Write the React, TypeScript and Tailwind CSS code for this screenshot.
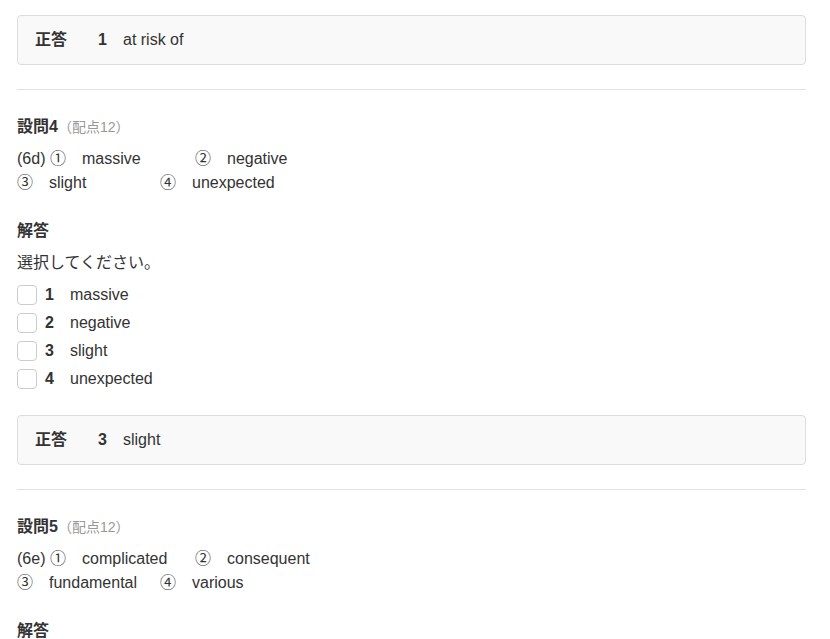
import React from "react";

const FONT = "font-['Liberation_Sans','Noto_Sans_CJK_JP',sans-serif]";

function AnswerBox({ n, text }: { n: string; text: string }) {
  return (
    <div className="h-[50px] rounded-[4px] border border-[#dddddd] bg-[#f9f9f9] pl-[17px] flex items-center text-[16px] leading-6 text-[#333333]">
      <span className="font-bold w-[63px]">正答</span>
      <span className="font-bold w-[25px]">{n}</span>
      <span>{text}</span>
    </div>
  );
}

function Item({ mark, text, w }: { mark: string; text: string; w: string }) {
  return (
    <span className={`inline-flex ${w}`}>
      <span className="w-[32px]">{mark}</span>
      <span>{text}</span>
    </span>
  );
}

function Question({
  num,
  code,
  opts,
  answer,
  showRest,
}: {
  num: string;
  code: string;
  opts: string[];
  answer: { n: string; text: string };
  showRest: boolean;
}) {
  return (
    <div>
      <div className="mt-[25px] h-6 flex items-center">
        <span className="font-bold text-[16px]">設問{num}</span>
        <span className="text-[14px] text-[#999999]">（配点12）</span>
      </div>
      <div className="mt-2 leading-6">
        <div className="flex">
          <span className="w-[33px]">({code})</span>
          <Item mark="①" text={opts[0]} w="w-[145px]" />
          <Item mark="②" text={opts[1]} w="" />
        </div>
        <div className="flex">
          <Item mark="③" text={opts[2]} w="w-[143px]" />
          <Item mark="④" text={opts[3]} w="" />
        </div>
      </div>
      <div className="mt-6 h-6 font-bold">解答</div>
      {showRest && (
        <>
          <div className="mt-2 h-6">選択してください。</div>
          <div className="mt-[6px]">
            {opts.map((o, i) => (
              <div key={i} className="h-7 flex items-center">
                <span className="w-5 h-5 rounded-[4px] border border-[#cccccc] bg-white" />
                <span className="ml-2 w-[25px] font-bold">{i + 1}</span>
                <span>{o}</span>
              </div>
            ))}
          </div>
          <div className="mt-[22px]">
            <AnswerBox n={answer.n} text={answer.text} />
          </div>
          <div className="mt-6 border-t border-[#e0e0e0]" />
        </>
      )}
    </div>
  );
}

export default function App() {
  return (
    <div className={`${FONT} h-[639px] overflow-hidden bg-white text-[16px] leading-6 text-[#333333]`}>
      <div className="pt-[15px] pl-[17px]">
        <div className="w-[789px]">
          <AnswerBox n="1" text="at risk of" />
          <div className="mt-6 border-t border-[#e0e0e0]" />
          <Question
            num="4"
            code="6d"
            opts={["massive", "negative", "slight", "unexpected"]}
            answer={{ n: "3", text: "slight" }}
            showRest={true}
          />
          <Question
            num="5"
            code="6e"
            opts={["complicated", "consequent", "fundamental", "various"]}
            answer={{ n: "", text: "" }}
            showRest={false}
          />
        </div>
      </div>
    </div>
  );
}
